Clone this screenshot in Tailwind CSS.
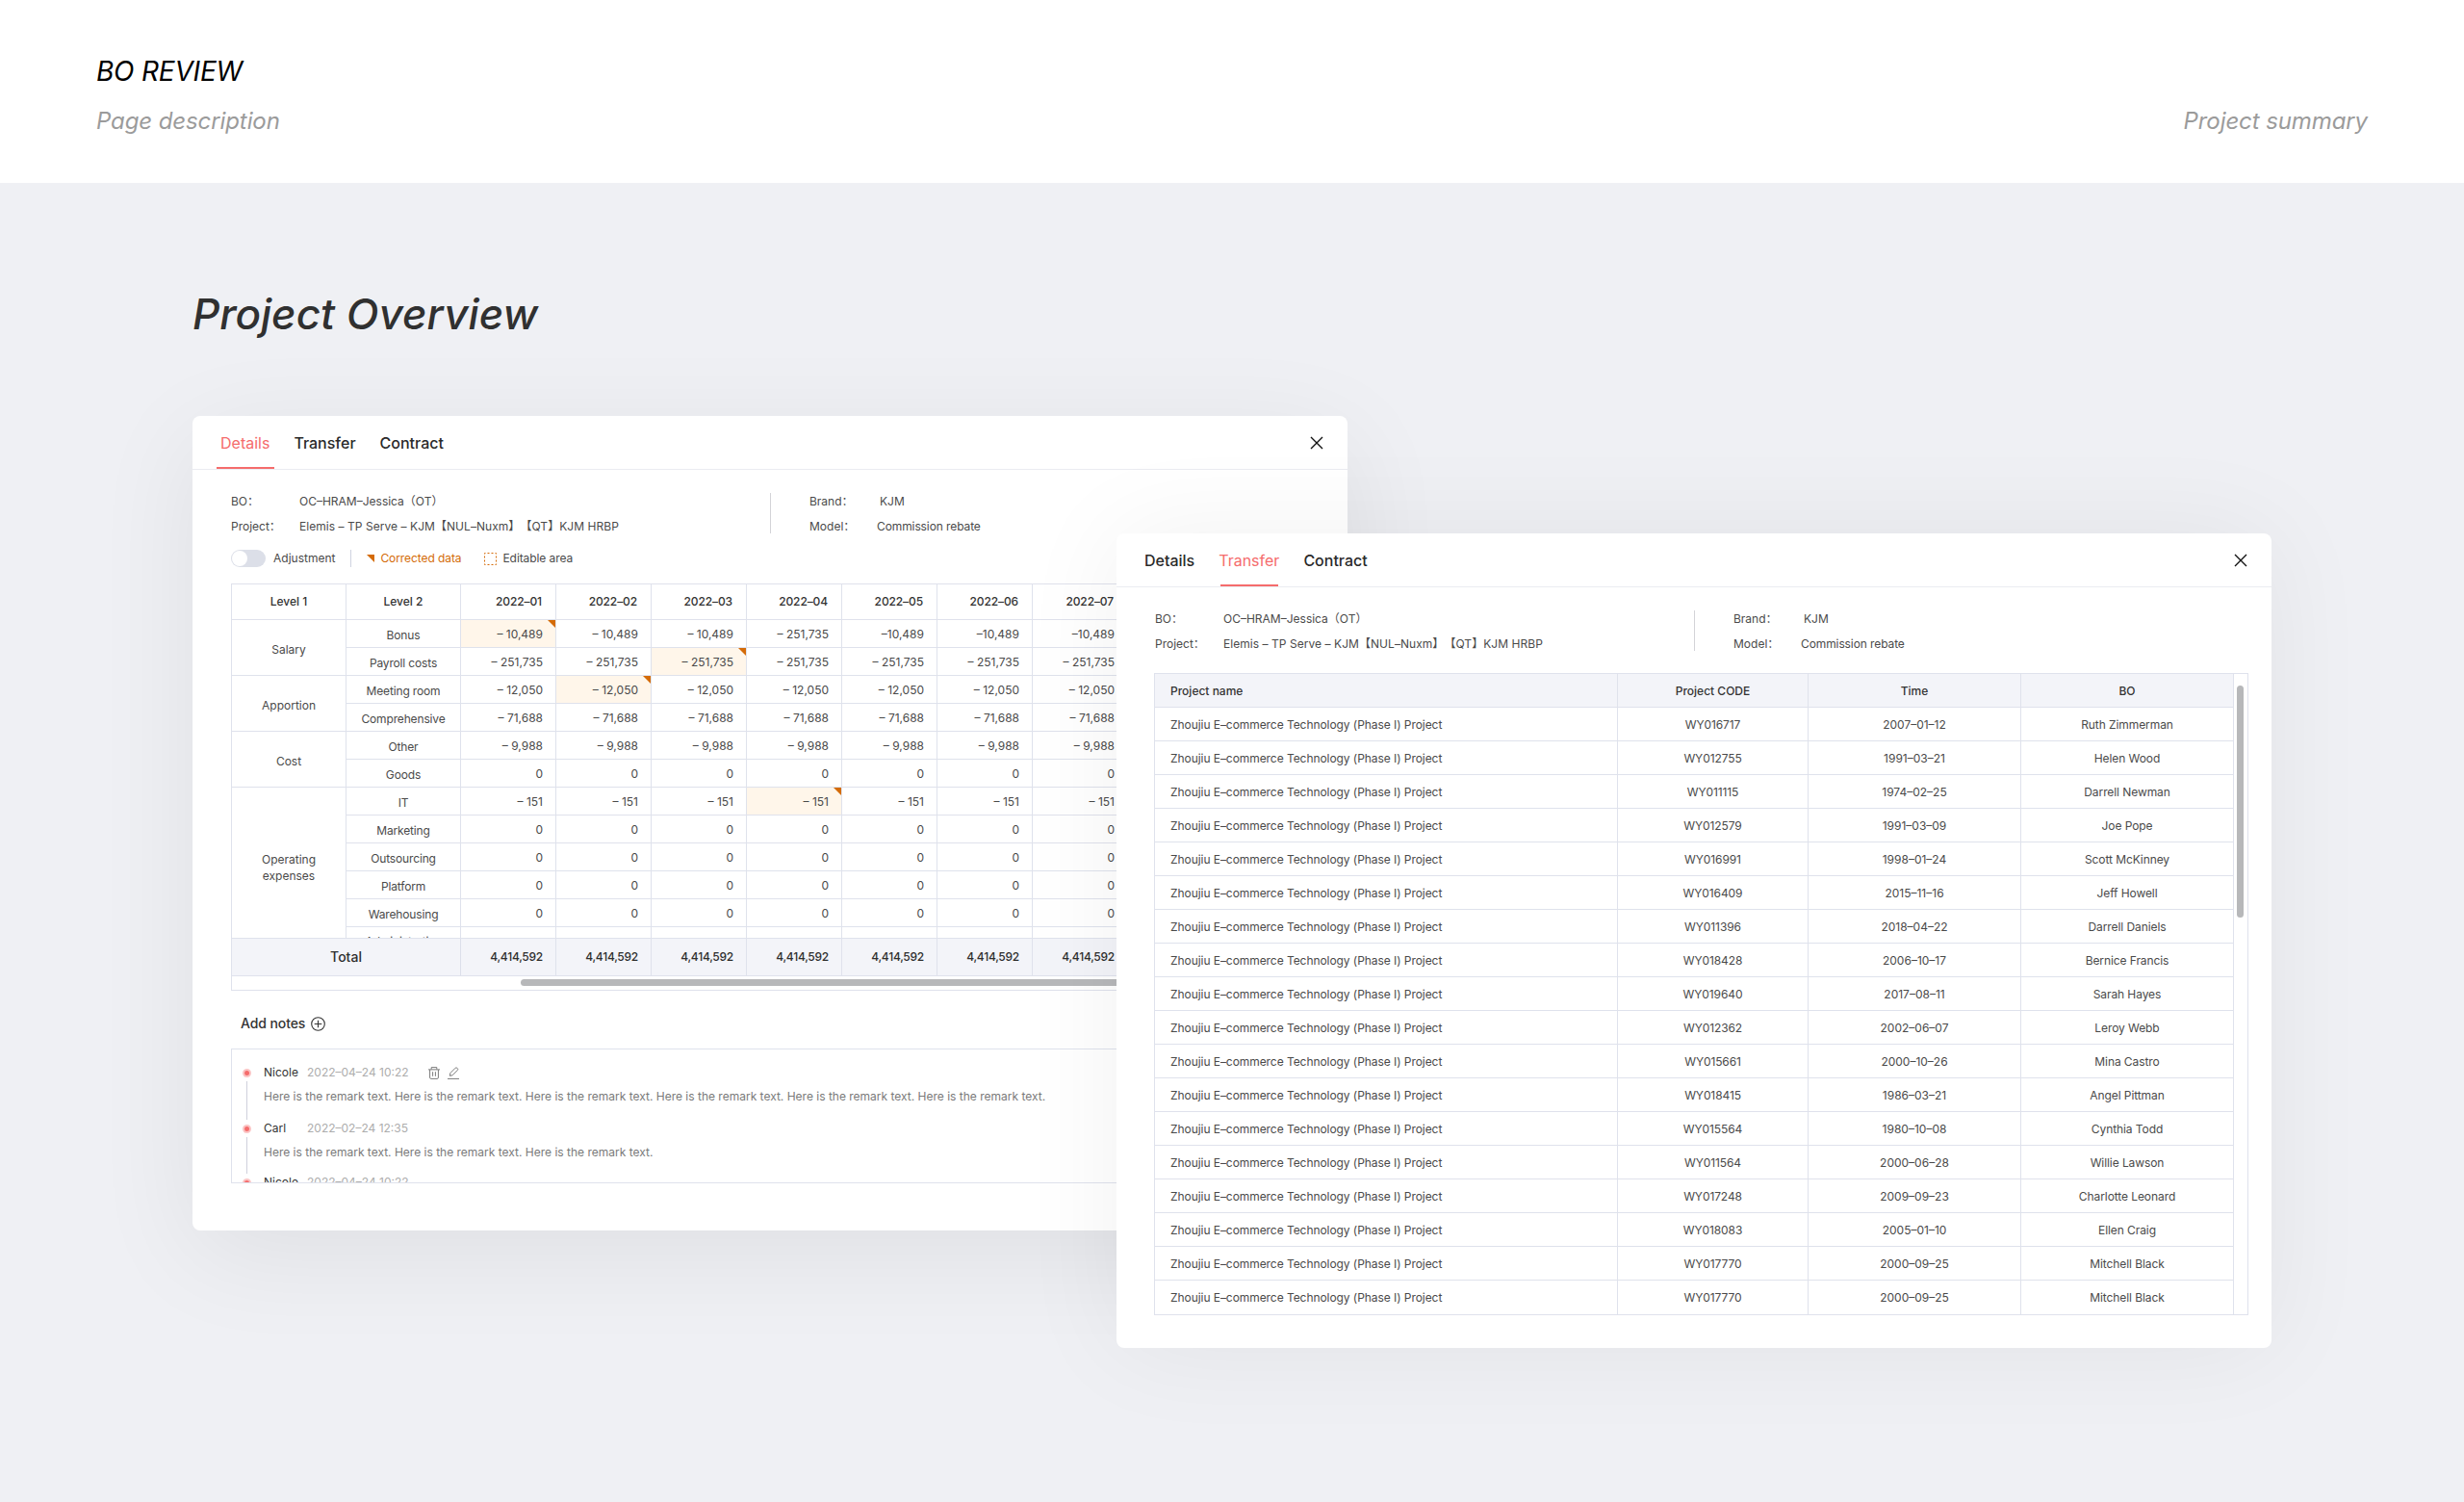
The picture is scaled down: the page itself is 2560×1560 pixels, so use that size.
<!DOCTYPE html>
<html lang="en">
<head>
  <meta charset="UTF-8" />
  <meta name="viewport" content="width=device-width, initial-scale=1.0" />
  <title>BO Review</title>
  <script src="https://cdn.jsdelivr.net/npm/@tailwindcss/browser@4"></script>
</head>
<body class="w-[2560px] h-[1560px] overflow-hidden bg-[#eff0f4] text-[#4a4a4a] text-xs font-[Inter,'Noto_Sans_CJK_SC',sans-serif] [text-spacing-trim:space-all]">
  <header class="h-[190px] bg-white px-[100px] pt-[58px] italic">
    <h1 class="text-[28px] leading-8 text-black tracking-[-0.2px]">BO REVIEW</h1>
    <div class="mt-5 flex justify-between text-2xl leading-8 text-[#9b9b9b] tracking-[-0.1px]">
      <p>Page description</p>
      <p>Project summary</p>
    </div>
  </header>

  <main class="relative h-[1370px]">
    <h2 class="pl-[200px] pt-[110px] text-[44px] leading-[52px] font-medium italic text-[#303030]">Project Overview</h2>

    <!-- Details window -->
    <section class="absolute left-[200px] top-[242px] w-[1200px] h-[846px] flex flex-col bg-white rounded-lg shadow-[0_24px_110px_rgba(0,0,0,0.07)]">
      <nav class="h-14 shrink-0 flex gap-[25px] pl-[29px] pr-[25px] border-b border-[#ebecf1] text-base text-[#2a2a2a] font-medium">
        <a class="relative h-full leading-[57px] font-normal text-[#f56c6c]">Details<i class="absolute bottom-0 -left-1 w-[60px] h-0.5 bg-[#f56c6c]"></i></a>
        <a class="leading-[57px]">Transfer</a>
        <a class="leading-[57px]">Contract</a>
        <svg class="ml-auto mt-[21px] w-3.5 h-3.5" viewBox="0 0 14 14" fill="none" stroke="#111" stroke-width="1.4"><path d="M1 1l12 12M13 1L1 13" /></svg>
      </nav>

      <div class="mt-6 ml-10 flex leading-[26px] text-[#4a4a4a]">
        <dl class="w-[560px] h-[52px] -mt-1 grid grid-cols-[71px_1fr]">
          <dt>BO：</dt><dd>OC–HRAM–Jessica（OT）</dd>
          <dt>Project：</dt><dd class="tracking-[0.05px]">Elemis – TP Serve – KJM【NUL–Nuxm】【QT】KJM HRBP</dd>
        </dl>
        <div class="w-px h-[42px] bg-[#d3d3d8]"></div>
        <dl class="ml-10 -mt-1 grid grid-cols-[70px_1fr]">
          <dt>Brand：</dt><dd class="pl-[3px]">KJM</dd>
          <dt>Model：</dt><dd class="tracking-[-0.1px]">Commission rebate</dd>
        </dl>
      </div>

      <div class="mt-2.5 ml-10 h-5 flex items-center">
        <span class="w-9 h-[18px] rounded-full bg-[#dcdfe8] p-px"><i class="block w-4 h-4 rounded-full bg-white"></i></span>
        <span class="ml-2">Adjustment</span>
        <i class="ml-4 w-px h-[18px] bg-[#cfd3e0]"></i>
        <svg class="ml-4 w-2 h-2" viewBox="0 0 8 8"><path d="M0 0h8v8z" fill="#d46b08" /></svg>
        <span class="ml-1.5 text-[#d46b08] tracking-[-0.08px]">Corrected data</span>
        <svg class="ml-6 w-[13px] h-[13px]" viewBox="0 0 13 13"><rect x=".5" y=".5" width="12" height="12" fill="none" stroke="#d46b08" stroke-dasharray="2 2" stroke-dashoffset="1" /></svg>
        <span class="ml-1.5 tracking-[-0.08px]">Editable area</span>
      </div>

      <div class="mt-4 ml-10 w-[1136px] h-[423px] flex flex-col border border-[#dfe2ec] overflow-hidden">
        <div id="cost-table" class="h-[367px] overflow-hidden"></div>
        <div id="cost-total" class="h-10 flex border-y border-[#dfe2ec] bg-[#f3f4f9] text-[#2e2e2e] font-medium leading-[38px]">
          <div class="w-[238px] shrink-0 border-r border-[#dcdfea] text-center text-sm leading-[38px]">Total</div>
        </div>
        <div class="ml-[300px] mt-[3px] h-[7px] w-[740px] rounded-full bg-[#b7b8ba]"></div>
      </div>

      <div class="mt-6 ml-[50px] flex items-center gap-1.5 text-sm leading-5 font-medium text-[#333] tracking-[-0.1px]">
        Add notes
        <svg class="w-[15px] h-[15px]" viewBox="0 0 15 15" fill="none" stroke="#333" stroke-width="1.1"><circle cx="7.5" cy="7.5" r="6.8" /><path d="M7.5 3.7v7.6M3.7 7.5h7.6" /></svg>
      </div>

      <div class="mt-4 ml-10 w-[1136px] h-[140px] pt-4 pl-[11px] border border-[#dfe2ec] overflow-hidden">
        <div class="flex h-[58px]">
          <div class="w-[9px] flex flex-col items-center">
            <i class="mt-1 w-[9px] h-[9px] shrink-0 rounded-full border-2 border-[#fbc4c4] bg-[#f56c6c]"></i>
            <i class="mt-1 w-px h-10 bg-[#cfd1dc]"></i>
          </div>
          <div class="ml-[13px]">
            <div class="h-4 flex items-center leading-4">
              <span class="w-[45px] text-[#333]">Nicole</span>
              <span class="w-[126px] text-[#adadad]">2022–04–24 10:22</span>
              <svg class="w-3 h-[13px]" viewBox="0 0 12 13" fill="none" stroke="#7a7a7a"><path d="M0 2.9h12M3.2 2.6V.6h5.6v2M1.6 3v8.2q0 1.2 1.2 1.2h6.4q1.2 0 1.2-1.2V3M4.6 5.2v4.6M7.4 5.2v4.6" /></svg>
              <svg class="ml-2 w-3 h-[13px]" viewBox="0 0 12 13" fill="none" stroke="#7a7a7a"><path d="M0 12.4h12M2.4 9.4l.4-2.8L8.2 1.2q.8-.8 1.6 0l.6.6q.8.8 0 1.6L5 8.8z" /></svg>
            </div>
            <p class="mt-[9px] leading-4 text-[#7a7a7a]">Here is the remark text. Here is the remark text. Here is the remark text. Here is the remark text. Here is the remark text. Here is the remark text.</p>
          </div>
        </div>
        <div class="flex h-14">
          <div class="w-[9px] flex flex-col items-center">
            <i class="mt-1 w-[9px] h-[9px] shrink-0 rounded-full border-2 border-[#fbc4c4] bg-[#f56c6c]"></i>
            <i class="mt-1 w-px h-[38px] bg-[#cfd1dc]"></i>
          </div>
          <div class="ml-[13px]">
            <div class="h-4 flex items-center leading-4">
              <span class="w-[45px] text-[#333]">Carl</span>
              <span class="text-[#adadad]">2022–02–24 12:35</span>
            </div>
            <p class="mt-[9px] leading-4 text-[#7a7a7a]">Here is the remark text. Here is the remark text. Here is the remark text.</p>
          </div>
        </div>
        <div class="flex">
          <i class="mt-1 w-[9px] h-[9px] shrink-0 rounded-full border-2 border-[#fbc4c4] bg-[#f56c6c]"></i>
          <div class="ml-[13px] flex leading-4">
            <span class="w-[45px] text-[#333]">Nicole</span>
            <span class="text-[#adadad]">2022–04–24 10:22</span>
          </div>
        </div>
      </div>
    </section>

    <!-- Transfer window -->
    <section class="absolute left-[1160px] top-[364px] w-[1200px] h-[846px] flex flex-col bg-white rounded-lg shadow-[0_0_110px_rgba(0,0,0,0.06)]">
      <nav class="h-14 shrink-0 flex gap-[25px] pl-[29px] pr-[25px] border-b border-[#ebecf1] text-base text-[#2a2a2a] font-medium">
        <a class="leading-[57px]">Details</a>
        <a class="relative h-full leading-[57px] font-normal text-[#f56c6c]">Transfer<i class="absolute bottom-0 left-0.5 w-[60px] h-0.5 bg-[#f56c6c]"></i></a>
        <a class="leading-[57px]">Contract</a>
        <svg class="ml-auto mt-[21px] w-3.5 h-3.5" viewBox="0 0 14 14" fill="none" stroke="#111" stroke-width="1.4"><path d="M1 1l12 12M13 1L1 13" /></svg>
      </nav>

      <div class="mt-6 ml-10 flex leading-[26px] text-[#4a4a4a]">
        <dl class="w-[560px] h-[52px] -mt-1 grid grid-cols-[71px_1fr]">
          <dt>BO：</dt><dd>OC–HRAM–Jessica（OT）</dd>
          <dt>Project：</dt><dd class="tracking-[0.05px]">Elemis – TP Serve – KJM【NUL–Nuxm】【QT】KJM HRBP</dd>
        </dl>
        <div class="w-px h-[42px] bg-[#d3d3d8]"></div>
        <dl class="ml-10 -mt-1 grid grid-cols-[70px_1fr]">
          <dt>Brand：</dt><dd class="pl-[3px]">KJM</dd>
          <dt>Model：</dt><dd class="tracking-[-0.1px]">Commission rebate</dd>
        </dl>
      </div>

      <div class="mt-[17px] ml-[39px] w-[1137px] h-[667px] flex border border-[#dfe2ec]">
        <div id="transfer-table" class="w-[1121px] border-r border-[#dfe2ec] text-[#4a4a4a]">
          <div class="h-[35px] grid grid-cols-[481px_198px_221px_220px] border-b border-[#dfe2ec] bg-[#f3f4f9] text-center leading-[35px] font-medium text-[#333]">
            <div class="pl-4 text-left border-r border-[#dfe2ec]">Project name</div>
            <div class="border-r border-[#dfe2ec]">Project CODE</div>
            <div class="border-r border-[#dfe2ec]">Time</div>
            <div>BO</div>
          </div>
        </div>
        <div class="ml-[3px] mt-3 w-[7px] h-[241px] rounded-full bg-[#b7b8ba]"></div>
      </div>
    </section>
  </main>

  <script>
    const months = ["2022–01", "2022–02", "2022–03", "2022–04", "2022–05", "2022–06", "2022–07"];
    const groups = [["Salary", 2], ["Apportion", 2], ["Cost", 2], ["Operating expenses", 6]];
    // label, value, index of the corrected month
    const rows = [
      ["Bonus", "– 10,489", 0],
      ["Payroll costs", "– 251,735", 2],
      ["Meeting room", "– 12,050", 1],
      ["Comprehensive", "– 71,688"],
      ["Other", "– 9,988"],
      ["Goods", "0"],
      ["IT", "– 151", 3],
      ["Marketing", "0"],
      ["Outsourcing", "0"],
      ["Platform", "0"],
      ["Warehousing", "0"],
      ["Administrative", ""],
    ];

    let html = '<div class="h-[37px] w-[1200px] flex border-b border-[#dfe2ec] text-[#333] font-medium leading-[36px]">' +
      '<div class="w-[119px] shrink-0 border-r border-[#dfe2ec] text-center">Level 1</div>' +
      '<div class="w-[119px] shrink-0 border-r border-[#dfe2ec] text-center">Level 2</div>' +
      months.map((m) => `<div class="w-[99px] shrink-0 border-r border-[#dfe2ec] pr-[14px] text-right tracking-[-0.1px]">${m}</div>`).join("") +
      "</div>";

    html += '<div class="flex w-[1200px]"><div class="w-[119px] shrink-0 border-r border-[#dfe2ec] text-center">';
    groups.forEach(([name, n]) => {
      const h = n === 2 ? "h-[58px]" : "h-[162px]";
      html += `<div class="${h} flex items-center justify-center px-6 pt-1 leading-[17px] border-b border-[#dfe2ec]">${name}</div>`;
    });
    html += '</div><div class="grow">';
    rows.forEach(([label, value, marked], r) => {
      html += '<div class="h-[29px] flex border-b border-[#dfe2ec] leading-[29px]">' +
        `<div class="w-[119px] shrink-0 border-r border-[#dfe2ec] text-center tracking-[-0.15px] ${r < 11 ? "pt-px" : ""}">${label}</div>`;
      months.forEach((m, i) => {
        let v = value;
        if (label === "Bonus" && i === 3) v = "– 251,735";
        if (label === "Bonus" && i > 3) v = "–10,489";
        const bg = marked === i ? "bg-[#fff6ea]" : "";
        const mark = marked === i ? '<svg class="absolute right-0 top-0 w-2 h-2" viewBox="0 0 8 8"><path d="M0 0h8v8z" fill="#d46b08" /></svg>' : "";
        html += `<div class="relative w-[99px] shrink-0 border-r border-[#dfe2ec] pr-[13px] text-right ${bg}">${v}${mark}</div>`;
      });
      html += "</div>";
    });
    html += "</div></div>";
    document.getElementById("cost-table").innerHTML = html;

    document.getElementById("cost-total").innerHTML += months.map(() =>
      '<div class="w-[99px] shrink-0 border-r border-[#dfe2ec] pr-[13px] text-right tracking-[-0.25px]">4,414,592</div>').join("");

    const transfers = [
      ["WY016717", "2007–01–12", "Ruth Zimmerman"],
      ["WY012755", "1991–03–21", "Helen Wood"],
      ["WY011115", "1974–02–25", "Darrell Newman"],
      ["WY012579", "1991–03–09", "Joe Pope"],
      ["WY016991", "1998–01–24", "Scott McKinney"],
      ["WY016409", "2015–11–16", "Jeff Howell"],
      ["WY011396", "2018–04–22", "Darrell Daniels"],
      ["WY018428", "2006–10–17", "Bernice Francis"],
      ["WY019640", "2017–08–11", "Sarah Hayes"],
      ["WY012362", "2002–06–07", "Leroy Webb"],
      ["WY015661", "2000–10–26", "Mina Castro"],
      ["WY018415", "1986–03–21", "Angel Pittman"],
      ["WY015564", "1980–10–08", "Cynthia Todd"],
      ["WY011564", "2000–06–28", "Willie Lawson"],
      ["WY017248", "2009–09–23", "Charlotte Leonard"],
      ["WY018083", "2005–01–10", "Ellen Craig"],
      ["WY017770", "2000–09–25", "Mitchell Black"],
      ["WY017770", "2000–09–25", "Mitchell Black"],
    ];
    document.getElementById("transfer-table").innerHTML += transfers.map(([code, time, bo], i) => `
      <div class="h-[35px] grid grid-cols-[481px_198px_221px_220px] text-center leading-[35px] ${i < 17 ? "border-b border-[#dfe2ec]" : ""}">
        <div class="pl-4 text-left border-r border-[#dfe2ec] tracking-[-0.06px]">Zhoujiu E–commerce Technology (Phase I) Project</div>
        <div class="border-r border-[#dfe2ec] tracking-[-0.1px]">${code}</div>
        <div class="border-r border-[#dfe2ec]">${time}</div>
        <div class="tracking-[-0.08px]">${bo}</div>
      </div>`).join("");
  </script>
</body>
</html>
